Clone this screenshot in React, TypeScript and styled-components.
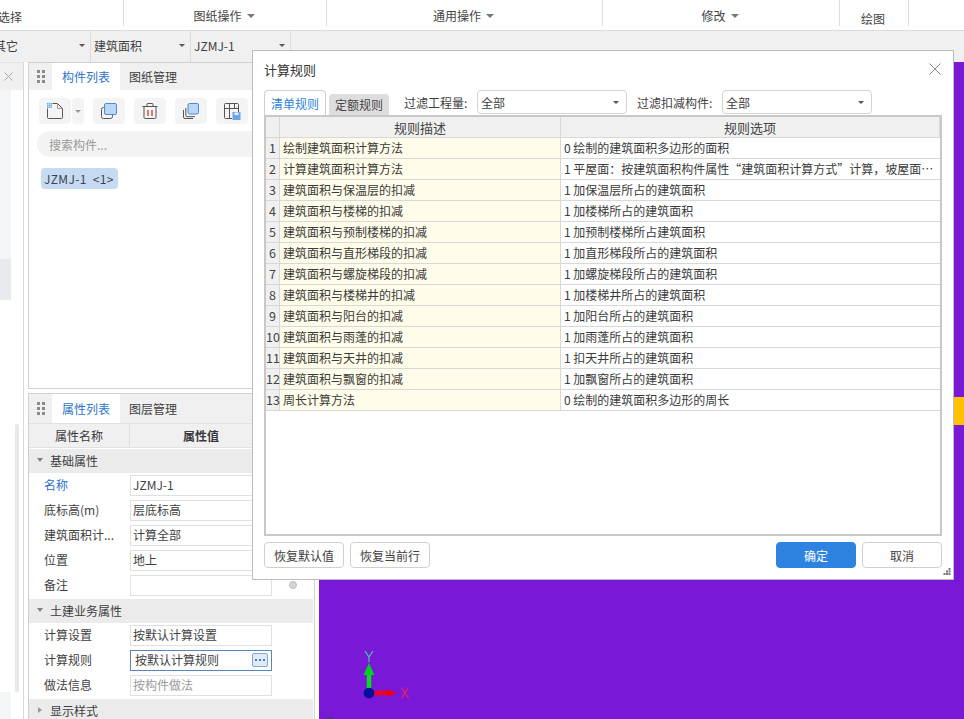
import React from "react";
import styled, { createGlobalStyle } from "styled-components";

const Global = createGlobalStyle`
  html, body { margin: 0; padding: 0; background: #fff; }
  * { box-sizing: border-box; }
  body { font-family: "Noto Sans CJK SC", "Noto Sans", sans-serif; font-size: 12px; color: #3a3a3a; }
`;

const Page = styled.div`
  position: relative; width: 964px; height: 719px; overflow: hidden;
  display: flex; flex-direction: column; background: #fff;
`;
const Ribbon = styled.div`
  height: 31px; flex: none; display: grid; align-items: start;
  grid-template-columns: 124px 203px 276px 237px 69px 1fr;
  border-bottom: 1px solid #dcdcdc; background: #fff;
`;
const RibbonGroup = styled.div<{ $shift?: number; $drop?: number; $end?: boolean }>`
  height: 26px; display: flex; align-items: center; gap: 5px;
  justify-content: ${(p) => (p.$end ? "flex-start" : "center")};
  border-right: 1px solid #dedede;
  margin-left: ${(p) => p.$shift ?? 0}px;
  padding: ${(p) => p.$drop ?? 5}px 2px 0 0;
  font-size: 12px; color: #444;
`;
const Caret = styled.span<{ $size?: number; $color?: string }>`
  width: 0; height: 0; flex: none;
  border-left: ${(p) => p.$size ?? 4}px solid transparent;
  border-right: ${(p) => p.$size ?? 4}px solid transparent;
  border-top: ${(p) => p.$size ?? 4}px solid ${(p) => p.$color ?? "#777"};
`;
const SelectorBar = styled.div`
  height: 31px; flex: none; display: grid; grid-template-columns: 91px 100px 100px 1fr;
  background: #f0f0f0;
`;
const SelectorCell = styled.div<{ $shift?: number }>`
  display: flex; align-items: center; justify-content: space-between;
  padding: 0 5px 2px 3px; border-right: 1px solid #dcdcdc; color: #3f3f3f;
  margin-left: ${(p) => p.$shift ?? 0}px;
`;
const EmptyCell = styled.div``;
const Main = styled.div`
  flex: 1; min-height: 0; display: flex;
`;
const LeftRail = styled.div`
  width: 24px; flex: none; margin-right: 4px; display: flex; flex-direction: column;
  border-right: 1px solid #d8d8d8;
`;
const RailHead = styled.div`
  height: 28px; flex: none; background: #f0f0f0; display: flex; align-items: center;
  justify-content: flex-end; padding: 0 10px 0 0; border-top: 1px solid #e4e4e4;
`;
const RailBody = styled.div`
  flex: 1; display: flex; flex-direction: column; position: relative;
`;
const RailBlock = styled.div<{ $h: number; $bg: string }>`
  width: 11px; height: ${(p) => p.$h}px; flex: none; background: ${(p) => p.$bg};
`;
const RailSpace = styled.div<{ $h: number }>`
  height: ${(p) => p.$h}px; flex: none; display: flex; justify-content: flex-end; padding-right: 4px;
`;
const RailScroll = styled.div`
  width: 4px; margin-top: 124px; background: #e8e8e8; border-radius: 2px 2px 0 0;
`;
const Middle = styled.div`
  width: 287px; flex: none; margin-right: 4px; display: flex; flex-direction: column; gap: 4px;
`;
const Panel = styled.section<{ $grow?: boolean }>`
  border: 1px solid #d0d0d0; display: flex; flex-direction: column; min-height: 0; overflow: hidden;
  background: #fff; ${(p) => (p.$grow ? "flex: 1; border-bottom: 0;" : "height: 327px; flex: none;")}
`;
const PanelHead = styled.div<{ $h: number }>`
  height: ${(p) => p.$h}px; flex: none; display: flex; align-items: stretch; background: #f0f0f0;
`;
const Grip = styled.span`
  width: 23px; flex: none; display: flex; align-items: center; justify-content: center;
`;
const PanelTab = styled.div<{ $active?: boolean }>`
  width: ${(p) => (p.$active ? 68 : 66)}px; display: flex; align-items: center; justify-content: center;
  padding-bottom: 1px;
  background: ${(p) => (p.$active ? "#fff" : "transparent")};
  color: ${(p) => (p.$active ? "#2f74c8" : "#3f3f3f")};
`;
const ToolRow = styled.div`
  display: flex; gap: 9px; padding: 8px 0 0 10px; flex: none;
`;
const SplitTool = styled.div`
  display: flex; gap: 1px;
`;
const ToolBtn = styled.div<{ $w?: number }>`
  width: ${(p) => p.$w ?? 32}px; height: 26px; background: #f4f4f4; border-radius: 4px;
  display: flex; align-items: center; justify-content: center;
`;
const Search = styled.div`
  margin: 7px 0 0 8px; width: 300px; height: 26px; flex: none; border-radius: 13px;
  background: #f3f3f3; color: #9a9a9a; padding-left: 12px; display: flex; align-items: center;
`;
const Chip = styled.div`
  margin: 11px 0 0 12px; width: 77px; height: 21px; border-radius: 4px; background: #c6dbf2;
  color: #3a4350; display: flex; align-items: center; padding: 0 0 1px 3px; white-space: pre; flex: none;
  letter-spacing: 0.35px;
`;
const ColumnHead = styled.div`
  height: 25px; flex: none; display: grid; grid-template-columns: 100px 1fr;
  background: #f0f0f0; border-top: 1px solid #e2e2e2; border-bottom: 1px solid #e2e2e2;
`;
const ColumnCell = styled.div<{ $bold?: boolean }>`
  display: flex; align-items: center; justify-content: center;
  font-weight: ${(p) => (p.$bold ? 700 : 400)};
  ${(p) => (p.$bold ? "padding-right: 42px; border-left: 1px solid #dedede;" : "")}
`;
const Band = styled.div`
  height: 24px; flex: none; display: flex; align-items: center; gap: 7px; padding: 0 0 2px 8px;
  background: #ebebeb; color: #3f3f3f; width: 284px; margin-top: 1px;
`;
const BandCaret = styled.span<{ $open?: boolean }>`
  width: 0; height: 0; flex: none;
  ${(p) =>
    p.$open
      ? "border-left: 3px solid transparent; border-right: 3px solid transparent; border-top: 4px solid #808080;"
      : "border-top: 3px solid transparent; border-bottom: 3px solid transparent; border-left: 4px solid #999; margin: 0 1px;"}
`;
const PropRow = styled.div`
  height: 25px; flex: none; display: grid; grid-template-columns: 86px 142px 1fr;
  padding-left: 15px; align-items: center;
`;
const PropName = styled.div<{ $blue?: boolean }>`
  color: ${(p) => (p.$blue ? "#2f6fca" : "#3f3f3f")}; white-space: nowrap; padding-bottom: 2px;
`;
const PropValue = styled.div<{ $muted?: boolean; $active?: boolean }>`
  height: 21px; border: 1px solid ${(p) => (p.$active ? "#5c84b4" : "#e0e0e0")};
  padding: 0 3px 2px ${(p) => (p.$active ? 4 : 2)}px; display: flex; align-items: center;
  justify-content: space-between; color: ${(p) => (p.$muted ? "#999" : "#3f3f3f")};
`;
const MoreBtn = styled.span`
  width: 16px; height: 14px; border: 1px solid #84a9d2; border-radius: 2px; background: #dfeaf7;
  display: flex; align-items: center; justify-content: center; gap: 2px;
`;
const MoreDot = styled.i`
  width: 2px; height: 2px; background: #4a7db5; display: block;
`;
const RadioDot = styled.span`
  width: 8px; height: 8px; border-radius: 50%; background: #d4d4d4; border: 1px solid #bdbdbd; justify-self: center;
  margin-bottom: 2px;
`;
const Canvas = styled.div`
  flex: 1; position: relative; background: #7a18d8; overflow: hidden;
`;
const OrangeStrip = styled.div`
  position: absolute; right: 0; top: 335px; width: 10px; height: 28px; background: #ffc000;
`;
const AxisSvg = styled.svg`
  position: absolute; left: 30px; top: 580px;
`;
const CornerMark = styled.div`
  position: absolute; left: 5px; top: 655px; width: 12px; height: 12px; border-radius: 50%; background: #3c3f78;
`;
const Dialog = styled.div`
  position: absolute; left: 252px; top: 50px; width: 702px; height: 530px;
  background: #fff; border: 1px solid #bcbcbc; padding: 0 11px;
  display: flex; flex-direction: column;
`;
const TitleBar = styled.div`
  height: 39px; flex: none; display: flex; align-items: center; justify-content: space-between;
  font-size: 13px; color: #333; padding: 0 1px 3px 0;
`;
const CloseIcon = styled.svg`
  display: block;
`;
const FilterRow = styled.div`
  height: 25px; flex: none; display: flex; align-items: flex-end;
`;
const RuleTab = styled.div<{ $active?: boolean }>`
  display: flex; align-items: center; justify-content: center;
  width: ${(p) => (p.$active ? 62 : 60)}px; height: ${(p) => (p.$active ? 25 : 21)}px;
  margin-right: ${(p) => (p.$active ? 3 : 15)}px;
  border: ${(p) => (p.$active ? "1px solid #cfcfcf" : "0")}; border-bottom: 0; border-radius: 4px 4px 0 0;
  background: ${(p) => (p.$active ? "#fff" : "#dedede")};
  color: ${(p) => (p.$active ? "#2f7fd8" : "#444")};
`;
const FilterLabel = styled.div<{ $w: number }>`
  width: ${(p) => p.$w}px; height: 24px; margin-bottom: 1px; display: flex; align-items: center; white-space: nowrap; color: #3f3f3f;
`;
const FilterSelect = styled.div`
  width: 150px; height: 24px; margin: 0 10px 1px 0; border: 1px solid #d4d4d4; border-radius: 4px;
  display: flex; align-items: center; justify-content: space-between; padding: 0 7px 0 3px; color: #3f3f3f;
`;
const TableBox = styled.div`
  height: 421px; flex: none; border: 2px solid #c8c8c8; overflow: hidden; background: #fff;
`;
const RuleTable = styled.table`
  width: 675px; table-layout: fixed; border-collapse: separate; border-spacing: 0;
  border-right: 1px solid #d0d0d0;
`;
const HeadCell = styled.th`
  height: 21px; padding: 0; background: #f0f0f0; font-weight: 400; font-size: 13px; line-height: 17px; color: #444;
  border-right: 1px solid #d8d8d8; border-bottom: 1px solid #d8d8d8; text-align: center;
`;
const IndexCell = styled.td`
  height: 21px; padding: 0 0 2px; background: #f0f0f0; text-align: center; font-size: 12.5px; line-height: 17px; color: #444;
  border-right: 1px solid #d8d8d8; border-bottom: 1px solid #d8d8d8; white-space: nowrap; overflow: visible;
`;
const DescCell = styled.td`
  height: 21px; padding: 0 0 2px 3px; background: #fffce9; color: #3a3a3a; line-height: 17px;
  border-right: 1px solid #d8d8d8; border-bottom: 1px solid #d8d8d8; white-space: nowrap; overflow: hidden;
`;
const OptionCell = styled.td`
  height: 21px; padding: 0 4px 2px 3px; color: #3a3a3a; line-height: 17px; border-bottom: 1px solid #d8d8d8;
  white-space: nowrap; overflow: hidden; text-overflow: ellipsis;
`;
const Footer = styled.div`
  flex: 1; display: flex; align-items: flex-start; gap: 6px; padding-top: 6px; position: relative;
`;
const Btn = styled.div<{ $primary?: boolean }>`
  width: 80px; height: 26px; border-radius: 4px; display: flex; align-items: center; justify-content: center;
  border: 1px solid ${(p) => (p.$primary ? "#2f83e0" : "#d0d0d0")};
  background: ${(p) => (p.$primary ? "#2f83e0" : "#fff")};
  color: ${(p) => (p.$primary ? "#fff" : "#3f3f3f")};
`;
const Spacer = styled.div`
  flex: 1;
`;
const ResizeGrip = styled.svg`
  position: absolute; right: -9px; bottom: 3px;
`;

const GripDots = () => (
  <svg width="8" height="14" viewBox="0 0 8 14">
    {[0, 5, 10].map((y) => [0, 5].map((x) => <rect key={`${x}-${y}`} x={x} y={y} width="3" height="3" fill="#8a8a8a" />))}
  </svg>
);

const NewIcon = () => (
  <svg width="16" height="16" viewBox="0 0 16 16" fill="none">
    <path d="M5.5.5h5l5 5v9a1 1 0 0 1-1 1H1.5a1 1 0 0 1-1-1V5.5" stroke="#555" />
    <path d="M10.5.5v5h5" stroke="#999" />
    <rect x="0" y="0" width="5" height="5" fill="#6fa5e6" />
    <path d="M0 1.5h5M0 3.5h5M1.5 0v5M3.5 0v5" stroke="#dcebfb" strokeWidth=".5" />
  </svg>
);
const CopyIcon = () => (
  <svg width="16" height="16" viewBox="0 0 16 16" fill="none">
    <rect x=".5" y="4.5" width="11" height="11" rx="2" stroke="#555" />
    <rect x="3.5" y=".5" width="12" height="11" rx="1.5" fill="#bcd6f6" stroke="#4d8ad8" />
  </svg>
);
const TrashIcon = () => (
  <svg width="16" height="16" viewBox="0 0 16 16" fill="none">
    <path d="M.5 3.5h15M5 3.5V1.3a.8.8 0 0 1 .8-.8h4.4a.8.8 0 0 1 .8.8v2.2" stroke="#555" />
    <path d="M2 3.5v10.8a1.2 1.2 0 0 0 1.2 1.2h9.6a1.2 1.2 0 0 0 1.2-1.2V3.5" stroke="#555" />
    <path d="M6 7v6M10 7v6" stroke="#c83a32" strokeWidth="1.3" />
  </svg>
);
const LayerIcon = () => (
  <svg width="16" height="16" viewBox="0 0 16 16" fill="none">
    <path d="M.5 7v7A1.5 1.5 0 0 0 2 15.5h8" stroke="#555" />
    <path d="M2.8 5v7.2a1.5 1.5 0 0 0 1.5 1.5H12" stroke="#555" />
    <rect x="5" y=".5" width="10.5" height="10.5" rx="1.5" fill="#bcd6f6" stroke="#4d8ad8" />
  </svg>
);
const SaveIcon = () => (
  <svg width="17" height="17" viewBox="0 0 17 17" fill="none">
    <path d="M8 15.5H1.5a1 1 0 0 1-1-1v-13a1 1 0 0 1 1-1h12a1 1 0 0 1 1 1V9" stroke="#555" />
    <path d="M.5 5.5h14M5.5 5.5v10M5.5 .5v5M10.5 .5v5" stroke="#555" />
    <rect x="8.5" y="9" width="8" height="8" fill="#6fa5e6" />
    <rect x="10.5" y="9.5" width="4" height="2.5" fill="#e5f0fc" />
  </svg>
);

const rules: [string, string][] = [
  ["绘制建筑面积计算方法", "0 绘制的建筑面积多边形的面积"],
  ["计算建筑面积计算方法", "1 平屋面：按建筑面积构件属性“建筑面积计算方式”计算，坡屋面按坡度计算全部或一半面积"],
  ["建筑面积与保温层的扣减", "1 加保温层所占的建筑面积"],
  ["建筑面积与楼梯的扣减", "1 加楼梯所占的建筑面积"],
  ["建筑面积与预制楼梯的扣减", "1 加预制楼梯所占建筑面积"],
  ["建筑面积与直形梯段的扣减", "1 加直形梯段所占的建筑面积"],
  ["建筑面积与螺旋梯段的扣减", "1 加螺旋梯段所占的建筑面积"],
  ["建筑面积与楼梯井的扣减", "1 加楼梯井所占的建筑面积"],
  ["建筑面积与阳台的扣减", "1 加阳台所占的建筑面积"],
  ["建筑面积与雨蓬的扣减", "1 加雨蓬所占的建筑面积"],
  ["建筑面积与天井的扣减", "1 扣天井所占的建筑面积"],
  ["建筑面积与飘窗的扣减", "1 加飘窗所占的建筑面积"],
  ["周长计算方法", "0 绘制的建筑面积多边形的周长"],
];

export default function App() {
  return (
    <Page>
      <Global />
      <Ribbon>
        <RibbonGroup $end $shift={-2} $drop={7}>选择</RibbonGroup>
        <RibbonGroup>图纸操作<Caret /></RibbonGroup>
        <RibbonGroup>通用操作<Caret /></RibbonGroup>
        <RibbonGroup>修改<Caret /></RibbonGroup>
        <RibbonGroup $drop={10}>绘图</RibbonGroup>
      </Ribbon>
      <SelectorBar>
        <SelectorCell $shift={-9}>其它<Caret $size={3} $color="#555" /></SelectorCell>
        <SelectorCell>建筑面积<Caret $size={3} $color="#555" /></SelectorCell>
        <SelectorCell>JZMJ-1<Caret $size={3} $color="#555" /></SelectorCell>
        <EmptyCell />
      </SelectorBar>
      <Main>
        <LeftRail>
          <RailHead>
            <svg width="9" height="9" viewBox="0 0 9 9"><path d="M.5.5l8 8M8.5.5l-8 8" stroke="#a8a8a8" /></svg>
          </RailHead>
          <RailBody>
            <RailBlock $h={169} $bg="#f4f5f7" />
            <RailBlock $h={41} $bg="#e9eaee" />
            <RailSpace $h={392}><RailScroll /></RailSpace>
            <RailBlock $h={27} $bg="#f4f5f7" />
          </RailBody>
        </LeftRail>
        <Middle>
          <Panel>
            <PanelHead $h={27}>
              <Grip><GripDots /></Grip>
              <PanelTab $active>构件列表</PanelTab>
              <PanelTab>图纸管理</PanelTab>
            </PanelHead>
            <ToolRow>
              <SplitTool>
                <ToolBtn><NewIcon /></ToolBtn>
                <ToolBtn $w={12}><Caret $size={3} $color="#999" /></ToolBtn>
              </SplitTool>
              <ToolBtn><CopyIcon /></ToolBtn>
              <ToolBtn><TrashIcon /></ToolBtn>
              <ToolBtn><LayerIcon /></ToolBtn>
              <ToolBtn><SaveIcon /></ToolBtn>
            </ToolRow>
            <Search>搜索构件...</Search>
            <Chip>JZMJ-1  &lt;1&gt;</Chip>
          </Panel>
          <Panel $grow>
            <PanelHead $h={29}>
              <Grip><GripDots /></Grip>
              <PanelTab $active>属性列表</PanelTab>
              <PanelTab>图层管理</PanelTab>
            </PanelHead>
            <ColumnHead>
              <ColumnCell>属性名称</ColumnCell>
              <ColumnCell $bold>属性值</ColumnCell>
            </ColumnHead>
            <Band><BandCaret $open />基础属性</Band>
            <PropRow><PropName $blue>名称</PropName><PropValue>JZMJ-1</PropValue></PropRow>
            <PropRow><PropName>底标高(m)</PropName><PropValue>层底标高</PropValue></PropRow>
            <PropRow><PropName>建筑面积计...</PropName><PropValue>计算全部</PropValue></PropRow>
            <PropRow><PropName>位置</PropName><PropValue>地上</PropValue></PropRow>
            <PropRow><PropName>备注</PropName><PropValue /><RadioDot /></PropRow>
            <Band><BandCaret $open />土建业务属性</Band>
            <PropRow><PropName>计算设置</PropName><PropValue>按默认计算设置</PropValue></PropRow>
            <PropRow>
              <PropName>计算规则</PropName>
              <PropValue $active>
                按默认计算规则
                <MoreBtn><MoreDot /><MoreDot /><MoreDot /></MoreBtn>
              </PropValue>
            </PropRow>
            <PropRow><PropName>做法信息</PropName><PropValue $muted>按构件做法</PropValue></PropRow>
            <Band><BandCaret />显示样式</Band>
          </Panel>
        </Middle>
        <Canvas>
          <OrangeStrip />
          <AxisSvg width="100" height="80" viewBox="0 0 100 80" fill="none">
            <path d="M20 51V32" stroke="#00e020" strokeWidth="4.5" />
            <path d="M20 21l5.5 12h-11z" fill="#00d020" />
            <path d="M24 51h15" stroke="#f0001c" strokeWidth="4.5" />
            <path d="M38 47l10 4-10 4z" fill="#e8001a" />
            <circle cx="20" cy="51" r="5.3" fill="#000f9a" />
            <path d="M16 9l4 6 4-6M20 15v5" stroke="#44c8a0" strokeWidth="1.2" />
            <path d="M52.5 45.5l7 11M59.5 45.5l-7 11" stroke="#ee2060" strokeWidth="1.2" />
          </AxisSvg>
          <CornerMark />
        </Canvas>
      </Main>
      <Dialog>
        <TitleBar>
          计算规则
          <CloseIcon width="12" height="12" viewBox="0 0 12 12"><path d="M.5.5l11 11M11.5.5l-11 11" stroke="#8a8a8a" /></CloseIcon>
        </TitleBar>
        <FilterRow>
          <RuleTab $active>清单规则</RuleTab>
          <RuleTab>定额规则</RuleTab>
          <FilterLabel $w={73}>过滤工程量:</FilterLabel>
          <FilterSelect>全部<Caret $size={3} $color="#555" /></FilterSelect>
          <FilterLabel $w={85}>过滤扣减构件:</FilterLabel>
          <FilterSelect>全部<Caret $size={3} $color="#555" /></FilterSelect>
        </FilterRow>
        <TableBox>
          <RuleTable>
            <colgroup>
              <col width="14" />
              <col width="281" />
              <col />
            </colgroup>
            <thead>
              <tr>
                <HeadCell />
                <HeadCell>规则描述</HeadCell>
                <HeadCell>规则选项</HeadCell>
              </tr>
            </thead>
            <tbody>
              {rules.map(([d, o], i) => (
                <tr key={d}>
                  <IndexCell>{i + 1}</IndexCell>
                  <DescCell>{d}</DescCell>
                  <OptionCell>{o}</OptionCell>
                </tr>
              ))}
            </tbody>
          </RuleTable>
        </TableBox>
        <Footer>
          <Btn>恢复默认值</Btn>
          <Btn>恢复当前行</Btn>
          <Spacer />
          <Btn $primary>确定</Btn>
          <Btn>取消</Btn>
          <ResizeGrip width="8" height="8" viewBox="0 0 8 8">
            {[[5.5, 0], [3, 2.5], [5.5, 2.5], [0.5, 5], [3, 5], [5.5, 5]].map(([x, y]) => (
              <rect key={`${x}-${y}`} x={x} y={y} width="2" height="2" fill="#777" />
            ))}
          </ResizeGrip>
        </Footer>
      </Dialog>
    </Page>
  );
}
